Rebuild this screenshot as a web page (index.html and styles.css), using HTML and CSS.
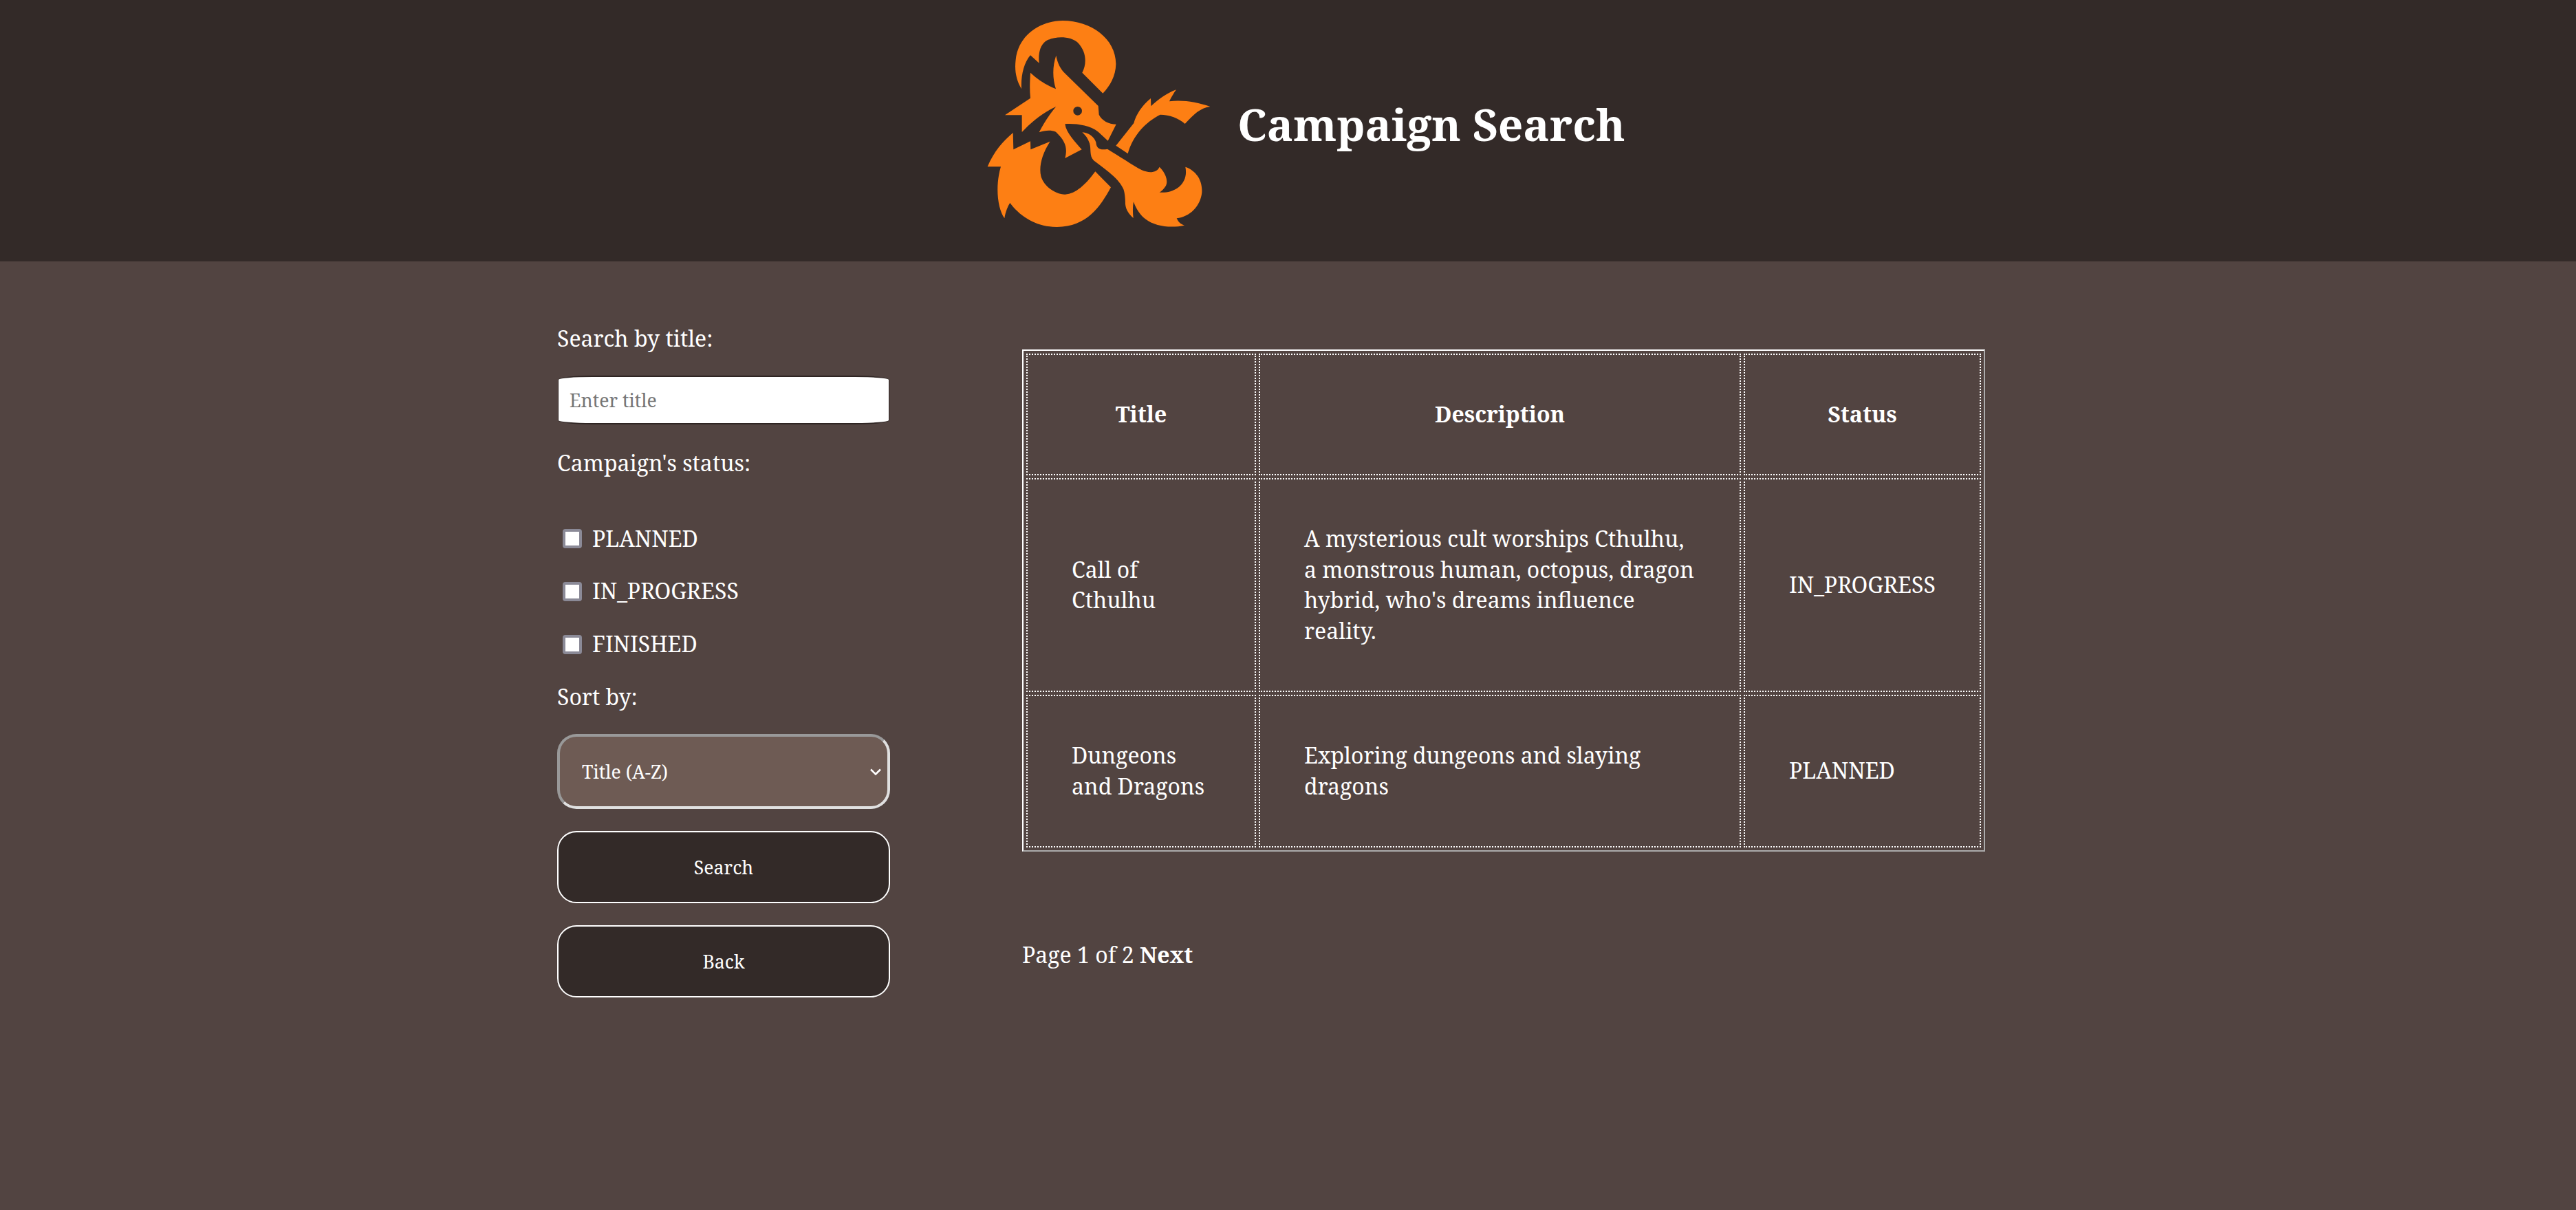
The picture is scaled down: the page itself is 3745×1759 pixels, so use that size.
FILE: index.html
```html
<!DOCTYPE html>
<html lang="en">
<head>
    <meta charset="UTF-8">
    <title>Campaign Search</title>
    <link rel="stylesheet" href="styles.css">
</head>
<body>
    <header class="topBar">
        <svg class="logo" viewBox="0 0 1080 1020" role="img" aria-label="Dungeons and Dragons">
            <path d="M195 358C172 318 164 278 170 230C182 120 280 60 375 60C500 60 608 140 607 250C606 300 582 345 550 377L460 287C480 250 480 195 440 155C410 128 340 125 300 150C275 170 268 205 272 245L234 211C205 245 192 300 195 358Z"/>
            <path fill-rule="evenodd" d="M346 212C352 245 365 270 385 290L530 432L533 470C545 495 575 512 608 512L572 584L530 545C490 515 430 508 385 511C390 550 430 590 458 622L385 660C395 620 392 590 345 545C320 535 295 540 272 547C290 510 320 465 346 435C290 460 240 500 197 546L197 472L123 472L234 398C230 360 232 320 234 287C270 320 310 345 345 358C330 310 330 260 346 212ZM421 454A19 19 0 1 0 459 454A19 19 0 1 0 421 454Z"/>
            <path d="M158 549L160 622L234 586L235 622L320 587C285 640 268 700 282 745C298 790 350 818 385 818C440 815 485 760 517 718L585 787C540 870 480 960 350 960C260 960 190 915 145 855C135 870 125 895 121 922C90 880 80 780 105 697L47 697C75 630 115 585 158 549Z"/>
            <path d="M460 547C490 550 510 565 520 590C522 620 540 625 570 620C620 650 680 690 720 712C750 725 785 725 797 698C825 725 835 760 825 780C815 795 805 805 797 809C860 815 925 775 910 698C960 715 985 760 982 810C975 870 930 915 872 922C880 940 890 948 906 953C850 965 780 960 735 925C710 905 695 880 684 850C680 870 680 895 683 921C665 905 650 885 648 860C648 830 645 810 640 795C620 750 570 715 510 670C490 650 500 620 492 595C485 575 475 560 460 547Z"/>
            <path d="M607 605L685 507C695 470 720 430 759 399L760 433C790 405 830 375 870 361C860 375 848 395 840 412C900 405 960 415 1018 435C975 440 945 470 908 510C880 485 840 470 800 470C740 500 680 560 659 640Z"/>
        </svg>
        <h1 class="pageTitle">Campaign Search</h1>
    </header>

    <main class="content">
        <form class="filters">
            <label class="fieldLabel" for="title">Search by title:</label>
            <input class="titleInput" id="title" type="text" placeholder="Enter title">

            <p class="fieldLabel statusLabel">Campaign's status:</p>
            <label class="checkRow"><input type="checkbox"> PLANNED</label>
            <label class="checkRow"><input type="checkbox"> IN_PROGRESS</label>
            <label class="checkRow"><input type="checkbox"> FINISHED</label>

            <label class="fieldLabel sortLabel" for="sort">Sort by:</label>
            <div class="sortBox">
                <select class="sortSelect" id="sort">
                    <option>Title (A-Z)</option>
                    <option>Title (Z-A)</option>
                </select>
                <svg class="sortArrow" viewBox="0 0 16 10"><path d="M1 1.5L8 8.5L15 1.5"/></svg>
            </div>

            <button class="actionButton" type="button">Search</button>
            <button class="actionButton" type="button">Back</button>
        </form>

        <section class="results">
            <table class="campaignTable">
                <thead>
                    <tr>
                        <th class="colTitle">Title</th>
                        <th class="colDescription">Description</th>
                        <th class="colStatus">Status</th>
                    </tr>
                </thead>
                <tbody>
                    <tr>
                        <td>Call of Cthulhu</td>
                        <td>A mysterious cult worships Cthulhu, a monstrous human, octopus, dragon hybrid, who's dreams influence reality.</td>
                        <td>IN_PROGRESS</td>
                    </tr>
                    <tr>
                        <td>Dungeons and Dragons</td>
                        <td>Exploring dungeons and slaying dragons</td>
                        <td>PLANNED</td>
                    </tr>
                </tbody>
            </table>
            <p class="pager">Page 1 of 2 <a class="pagerLink" href="#">Next</a></p>
        </section>
    </main>
</body>
</html>
```

FILE: styles.css
```css
* {
    box-sizing: border-box;
}
body {
    margin: 0;
    min-height: 100vh;
    background: #524441;
    color: white;
    font-family: "Noto Serif", "DejaVu Serif", "Liberation Serif", serif;
    font-size: 32px;
    line-height: 1.4;
}

/* Шапка */
.topBar {
    height: 380px;
    background: #332a28;
    display: flex;
    align-items: center;
    padding-left: 1420px;
}
.logo {
    width: 360px;
    height: 340px;
    fill: #fd7f14;
    margin: 0 19px 20px 0;
}
.pageTitle {
    margin: 0 0 18px;
    font-size: 64px;
    font-weight: bold;
}

/* Основная часть */
.content {
    display: flex;
    align-items: flex-start;
    padding: 90px 0 0 810px;
}
.filters {
    width: 484px;
    display: flex;
    flex-direction: column;
}
.fieldLabel {
    margin: 0;
}
.titleInput {
    width: 482px;
    height: 71px;
    margin: 31px 0 34px 1px;
    padding: 0 16px;
    border: 2px solid #2f2523;
    border-left-width: 1px;
    border-right-width: 1px;
    border-radius: 50px / 6px;
    background: white;
    font: inherit;
    font-size: 26.67px;
}
.statusLabel {
    margin-bottom: 65px;
}
.checkRow {
    display: flex;
    align-items: center;
    margin-bottom: 32px;
}
.checkRow input {
    appearance: none;
    width: 28px;
    height: 28px;
    margin: 0 15px 0 8px;
    border: 4px solid #8b8a97;
    border-radius: 4px;
    background: white;
}
.sortLabel {
    margin-bottom: 31px;
}
.sortBox {
    position: relative;
    margin-bottom: 32px;
}
.sortSelect {
    appearance: none;
    display: block;
    width: 484px;
    height: 109px;
    padding: 0 32px;
    border: 4px solid;
    border-color: #999 #e0e0e0 #e0e0e0 #999;
    border-radius: 28px;
    background-color: #6e5b54;
    color: white;
    font: inherit;
    font-size: 26.67px;
}
.sortArrow {
    position: absolute;
    top: 50px;
    right: 13px;
    width: 16px;
    height: 10px;
    fill: none;
    stroke: white;
    stroke-width: 2.6;
}
.actionButton {
    width: 484px;
    height: 105px;
    margin-bottom: 32px;
    border: 2px solid white;
    border-radius: 28px;
    background: #332a28;
    color: white;
    font: inherit;
    font-size: 26.67px;
}

/* Таблица */
.results {
    width: 1400px;
    margin: 38px 0 0 192px;
}
.campaignTable {
    width: 100%;
    table-layout: fixed;
    border: 2px outset white;
    border-spacing: 4px;
}
.campaignTable th,
.campaignTable td {
    padding: 64px;
    border: 2px dotted white;
    font-size: 32px;
}
.colTitle {
    width: 334px;
}
.colDescription {
    width: 701px;
}
.colStatus {
    width: 345px;
}
.pager {
    margin: 128px 0 0;
}
.pagerLink {
    color: white;
    font-weight: bold;
    text-decoration: none;
}
```
